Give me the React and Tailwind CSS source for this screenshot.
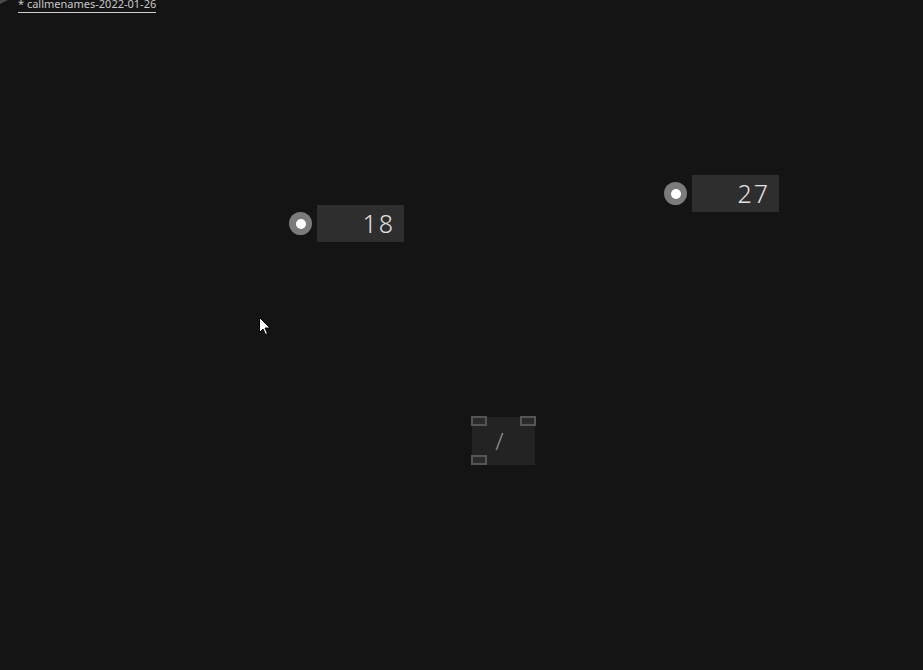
import React from "react";

const NumberNode = ({ value }) => (
  <div className="flex items-center gap-[5px]">
    <div className="flex h-[23px] w-[23px] items-center justify-center rounded-full bg-[#7b7b7b]">
      <div className="h-[10px] w-[10px] rounded-full bg-white" />
    </div>
    <div className="flex h-[37px] w-[87px] items-center justify-end bg-[#2e2e2e] pr-[9px] text-[25px] font-light leading-none tracking-[2px] text-[#e2e2e2]">
      {value}
    </div>
  </div>
);

const Port = ({ className }) => (
  <div className={"absolute h-[10px] w-[16px] border-2 border-[#555555] bg-[#2a2a2a] " + className} />
);

const OpNode = ({ label }) => (
  <div className="relative h-[49px] w-[65px]">
    <div className="absolute inset-x-[1px] top-[1px] bottom-0 flex items-center justify-center bg-[#232323] pr-[8px] text-[24px] font-light text-[#8f8f8f]">
      {label}
    </div>
    <Port className="left-0 top-0" />
    <Port className="right-0 top-0" />
    <Port className="left-0 bottom-0" />
  </div>
);

export default function App() {
  return (
    <div
      className="relative h-[670px] w-[923px] overflow-hidden bg-[#141414]"
      style={{ fontFamily: '"Noto Sans", "Open Sans", sans-serif' }}
    >
      {/* tab strip */}
      <div className="flex items-start">
        <svg width="8" height="5" className="shrink-0">
          <polygon points="0,0 8,0 0,4" fill="#4a4a4a" />
        </svg>
        <div className="ml-[10px] -mt-[4px] border-b border-[#d0d0d0] pb-[1px] text-[11px] leading-[15px] text-[#c8c8c8]">
          * callmenames-2022-01-26
        </div>
      </div>

      {/* canvas nodes */}
      <div className="absolute left-[289px] top-[205px]">
        <NumberNode value="18" />
      </div>
      <div className="absolute left-[664px] top-[175px]">
        <NumberNode value="27" />
      </div>
      <div className="absolute left-[471px] top-[416px]">
        <OpNode label="/" />
      </div>

      {/* mouse cursor */}
      <svg className="absolute left-[259px] top-[317px]" width="13" height="20" viewBox="0 0 13 20">
        <path d="M0.5 0.5 L0.5 15.5 L4 12 L6.5 17.5 L8.5 16.5 L6 11 L11 11 Z" fill="#ffffff" stroke="#000000" strokeWidth="1" />
      </svg>
    </div>
  );
}
